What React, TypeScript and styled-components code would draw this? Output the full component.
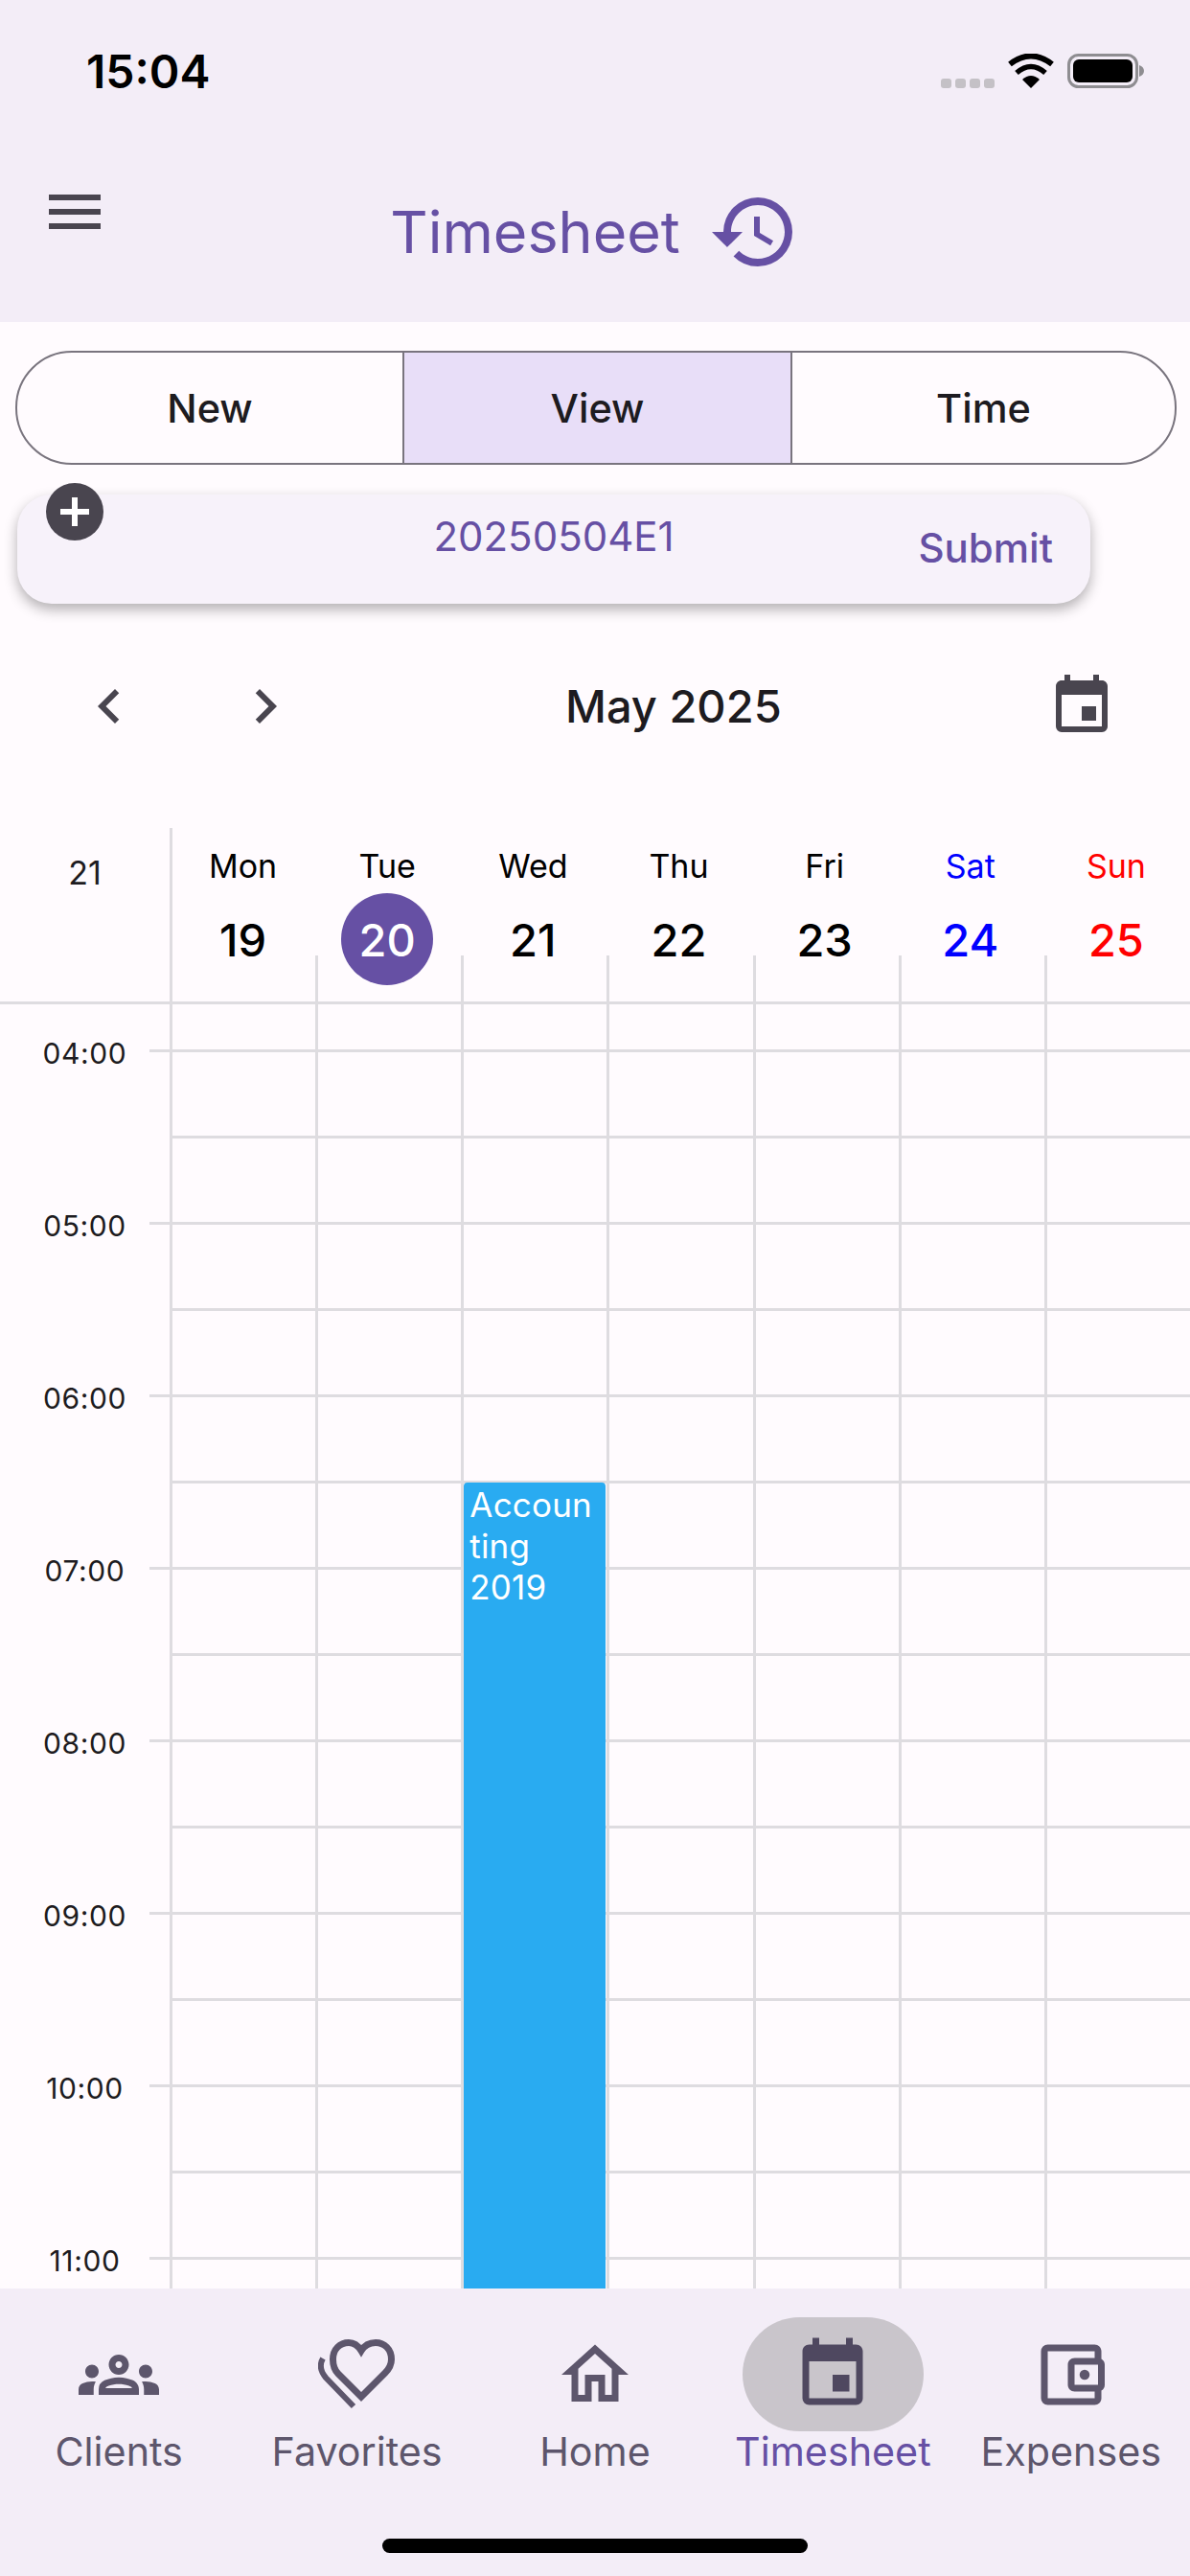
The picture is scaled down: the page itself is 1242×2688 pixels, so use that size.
import styled, { createGlobalStyle } from 'styled-components';
import {
    MdChevronLeft,
    MdChevronRight,
    MdEvent,
    MdHistory,
    MdMenu,
    MdOutlineAccountBalanceWallet,
    MdOutlineGroups,
    MdOutlineHome,
} from 'react-icons/md';

const PURPLE = '#6650A4';
const INK = '#1D1B20';
const ICON = '#49454F';
const LINE = '#DEDCE0';
const NAV_ICON = '#5D566C';
const SURFACE = '#F3EDF7';

const GlobalStyle = createGlobalStyle`
    html, body {
        margin: 0;
        padding: 0;
        background: #FFFBFE;
    }
    * {
        box-sizing: border-box;
    }
`

//#region   Header
const Page = styled.div`
    width: 1242px;
    height: 2688px;
    overflow: hidden;
    display: flex;
    flex-direction: column;
    background: #FFFBFE;
    font-family: Inter, "Liberation Sans", sans-serif;
    color: ${INK};
`

const Header = styled.header`
    height: 336px;
    flex: none;
    background: ${SURFACE};
    display: flex;
    flex-direction: column;
`

const StatusBar = styled.div`
    height: 148px;
    display: flex;
    align-items: center;
    padding: 0 48px 0 90px;
`

const Clock = styled.span`
    font-size: 48px;
    font-weight: 600;
    color: #000;
`

const StatusIcons = styled.div`
    margin-left: auto;
    display: flex;
    align-items: center;
    gap: 14px;
`

const TitleBar = styled.div`
    flex: 1;
    display: grid;
    grid-template-columns: 1fr auto 1fr;
    align-items: start;
`

const MenuButton = styled.div`
    width: 72px;
    height: 72px;
    margin: 37px 0 0 42px;
    color: ${ICON};
    font-size: 72px;
    line-height: 0;
`

const TitleGroup = styled.div`
    display: flex;
    align-items: center;
    gap: 29px;
    margin-top: 46px;
    color: ${PURPLE};
    font-size: 96px;
    line-height: 0;
`

const Title = styled.h1`
    margin: 0;
    font-size: 61px;
    font-weight: 400;
    line-height: 96px;
`
//#endregion   Header

//#region   Segmentos e cartão
const Segmented = styled.div`
    margin: 30px 0 0 16px;
    width: 1212px;
    height: 119px;
    flex: none;
    display: grid;
    grid-template-columns: 402px 405px 1fr;
    border: 2.5px solid #79747E;
    border-radius: 59px;
    overflow: hidden;
`

const Segment = styled.div<{ $selected?: boolean }>`
    display: flex;
    align-items: center;
    justify-content: center;
    font-size: 41.5px;
    font-weight: 500;
    background: ${props => props.$selected ? '#E8DEF8' : 'transparent'};
    & + & {
        border-left: 2.5px solid #79747E;
    }
`

const Card = styled.div`
    position: relative;
    margin: 31px 0 0 18px;
    width: 1120px;
    height: 114px;
    flex: none;
    display: grid;
    grid-template-columns: 1fr auto 1fr;
    background: #F7F2FA;
    border-radius: 36px;
    box-shadow: 0 6px 14px rgba(0, 0, 0, 0.3);
    color: ${PURPLE};
`

const AddButton = styled.div`
    position: absolute;
    left: 30px;
    top: -12px;
    width: 60px;
    height: 60px;
    border-radius: 50%;
    background: ${ICON};
    display: flex;
    align-items: center;
    justify-content: center;
`

const CardCode = styled.div`
    grid-column: 2;
    font-size: 42px;
    line-height: 50px;
    padding-top: 19px;
`

const SubmitLabel = styled.div`
    grid-column: 3;
    justify-self: end;
    padding: 31px 39px 0 0;
    font-size: 42px;
    font-weight: 500;
    line-height: 50px;
`
//#endregion   Segmentos e cartão

//#region   Barra do mês
const MonthBar = styled.div`
    flex: none;
    height: 72px;
    margin-top: 71px;
    padding: 0 77px 0 78px;
    display: flex;
    align-items: center;
    color: ${ICON};
    font-size: 72px;
    line-height: 0;
`

const MonthArrows = styled.div`
    display: flex;
    gap: 91px;
`

const MonthTitle = styled.div`
    margin-left: 277px;
    font-size: 47px;
    font-weight: 500;
    line-height: 60px;
    color: ${INK};
`

const MonthPicker = styled.div`
    margin-left: auto;
`
//#endregion   Barra do mês

//#region   Calendário
const Calendar = styled.section`
    flex: 1;
    min-height: 0;
    margin-top: 91px;
    display: flex;
    flex-direction: column;
    overflow: hidden;
`

const WeekHead = styled.div`
    flex: none;
    height: 184px;
    display: flex;
    border-bottom: 3px solid ${LINE};
`

const WeekNumber = styled.div`
    width: 177px;
    flex: none;
    font-size: 34px;
    line-height: 44px;
    padding-top: 25px;
    text-align: center;
`

const DayHeads = styled.div`
    flex: 1;
    display: grid;
    grid-template-columns: repeat(7, 1fr);
`

const DayHead = styled.div<{ $tone?: string }>`
    position: relative;
    display: flex;
    flex-direction: column;
    align-items: center;
    padding-right: 2px;
    color: ${props => props.$tone || '#000'};
    &:first-child {
        border-left: 3px solid ${LINE};
    }
    &:not(:first-child)::before {
        content: '';
        position: absolute;
        left: 0;
        bottom: 0;
        height: 48px;
        border-left: 3px solid ${LINE};
    }
`

const DayName = styled.span`
    margin-top: 18px;
    font-size: 34px;
    line-height: 44px;
`

const DayNumber = styled.span<{ $today?: boolean }>`
    position: relative;
    margin-top: 6px;
    width: 96px;
    height: 96px;
    border-radius: 50%;
    display: flex;
    align-items: center;
    justify-content: center;
    font-size: 47px;
    font-weight: 500;
    background: ${props => props.$today ? PURPLE : 'transparent'};
    color: ${props => props.$today ? '#FFF' : 'inherit'};
`

const GridBody = styled.div`
    flex: 1;
    min-height: 0;
    display: flex;
`

const TimeGutter = styled.div`
    width: 177px;
    flex: none;
    padding-top: 47px;
`

const HourSlot = styled.div`
    position: relative;
    height: 180px;
    &::after {
        content: '';
        position: absolute;
        top: 0;
        left: 156px;
        right: 0;
        border-top: 3px solid ${LINE};
    }
`

const HourLabel = styled.div`
    position: absolute;
    top: -16px;
    width: 177px;
    font-size: 30px;
    letter-spacing: 0.6px;
    line-height: 40px;
    text-align: center;
`

const DayColumns = styled.div`
    flex: 1;
    display: grid;
    grid-template-columns: repeat(7, 1fr);
`

const DayColumn = styled.div`
    position: relative;
    border-left: 3px solid ${LINE};
    background-image: linear-gradient(${LINE} 3px, transparent 3px);
    background-size: 100% 90px;
    background-position: 0 47px;
`

const EventBlock = styled.div`
    position: absolute;
    left: 0;
    right: 1px;
    top: 499px;
    bottom: 0;
    padding: 2px 6px;
    border-radius: 4px 4px 0 0;
    background: #29ABF1;
    color: #FFF;
    font-size: 35px;
    letter-spacing: 0.2px;
    line-height: 43px;
    overflow-wrap: anywhere;
`
//#endregion   Calendário

//#region   Navegação inferior
const BottomNav = styled.nav`
    flex: none;
    height: 300px;
    background: ${SURFACE};
    position: relative;
    display: grid;
    grid-template-columns: repeat(5, 1fr);
    align-items: start;
    padding-top: 30px;
`

const NavItem = styled.div<{ $active?: boolean }>`
    display: flex;
    flex-direction: column;
    align-items: center;
    color: ${props => props.$active ? PURPLE : NAV_ICON};
`

const NavIcon = styled.div<{ $active?: boolean }>`
    width: 189px;
    height: 119px;
    border-radius: 60px;
    display: flex;
    align-items: center;
    justify-content: center;
    font-size: 84px;
    line-height: 0;
    background: ${props => props.$active ? '#C9C5CB' : 'transparent'};
    color: ${props => props.$active ? '#4F4860' : NAV_ICON};
`

const NavLabel = styled.span`
    margin-top: -1px;
    font-size: 41.25px;
    line-height: 44px;
    white-space: nowrap;
`

const HomeIndicator = styled.div`
    position: absolute;
    left: 399px;
    bottom: 24px;
    width: 444px;
    height: 15px;
    border-radius: 8px;
    background: #000;
`
//#endregion   Navegação inferior

function PlusGlyph() {
    return (
        <svg width="30" height="30" viewBox="0 0 30 30">
            <path d="M15 0v30M0 15h30" stroke="#FFF" strokeWidth="6" />
        </svg>
    );
}

function SignalDots() {
    return (
        <svg width="56" height="36" viewBox="0 0 56 36" fill="#C4C1C6">
            <rect x="0" y="26" width="11" height="10" rx="3" />
            <rect x="15" y="26" width="11" height="10" rx="3" />
            <rect x="30" y="26" width="11" height="10" rx="3" />
            <rect x="45" y="26" width="11" height="10" rx="3" />
        </svg>
    );
}

function WifiGlyph() {
    return (
        <svg width="48" height="36" viewBox="0 0 48 36">
            <path d="M24 36 L15 27 Q24 19 33 27 Z" fill="#000" />
            <path d="M9 20 Q24 7 39 20" fill="none" stroke="#000" strokeWidth="5.5" />
            <path d="M2 11 Q24 -6 46 11" fill="none" stroke="#000" strokeWidth="6" />
        </svg>
    );
}

function BatteryGlyph() {
    return (
        <svg width="80" height="36" viewBox="0 0 80 36">
            <rect x="1.5" y="1.5" width="71" height="33" rx="10" fill="none" stroke="#8E8D91" strokeWidth="3" />
            <rect x="6" y="6" width="62" height="24" rx="6" fill="#000" />
            <path d="M75 12 C78 13 80 15 80 18 C80 21 78 23 75 24 Z" fill="#8E8D91" />
        </svg>
    );
}

function DoubleHeart() {
    return (
        <svg width="82" height="76" viewBox="0 0 82 76" fill="none" stroke={NAV_ICON}>
            <path
                strokeWidth="7"
                strokeLinejoin="miter"
                d="M45 61 L21 37 C17 33 15.5 27 15.5 22 C15.5 11 23 4.5 32 4.5 C37 4.5 42 8 45 13 C48 8 53 4.5 60 4.5 C69 4.5 76.5 11 76.5 22 C76.5 27 74 32 70 36 Z"
            />
            <path strokeWidth="6" d="M5 21 C1 28 3 35 8 41 L37 71" />
        </svg>
    );
}

const horas = ['04:00', '05:00', '06:00', '07:00', '08:00', '09:00', '10:00', '11:00'];

const dias = [
    { nome: 'Mon', numero: 19 },
    { nome: 'Tue', numero: 20, hoje: true },
    { nome: 'Wed', numero: 21 },
    { nome: 'Thu', numero: 22 },
    { nome: 'Fri', numero: 23 },
    { nome: 'Sat', numero: 24, tom: '#0000FF' },
    { nome: 'Sun', numero: 25, tom: '#FF0000' },
];

const abas = [
    { nome: 'Clients', icone: <MdOutlineGroups /> },
    { nome: 'Favorites', icone: <DoubleHeart /> },
    { nome: 'Home', icone: <MdOutlineHome /> },
    { nome: 'Timesheet', icone: <MdEvent />, ativo: true },
    { nome: 'Expenses', icone: <MdOutlineAccountBalanceWallet /> },
];

export default function App() {
    return (
        <Page>
            <GlobalStyle />
            <Header>
                <StatusBar>
                    <Clock>15:04</Clock>
                    <StatusIcons>
                        <SignalDots />
                        <WifiGlyph />
                        <BatteryGlyph />
                    </StatusIcons>
                </StatusBar>
                <TitleBar>
                    <MenuButton><MdMenu /></MenuButton>
                    <TitleGroup>
                        <Title>Timesheet</Title>
                        <MdHistory />
                    </TitleGroup>
                </TitleBar>
            </Header>

            <Segmented>
                <Segment>New</Segment>
                <Segment $selected>View</Segment>
                <Segment>Time</Segment>
            </Segmented>

            <Card>
                <AddButton><PlusGlyph /></AddButton>
                <CardCode>20250504E1</CardCode>
                <SubmitLabel>Submit</SubmitLabel>
            </Card>

            <MonthBar>
                <MonthArrows>
                    <MdChevronLeft />
                    <MdChevronRight />
                </MonthArrows>
                <MonthTitle>May 2025</MonthTitle>
                <MonthPicker><MdEvent /></MonthPicker>
            </MonthBar>

            <Calendar>
                <WeekHead>
                    <WeekNumber>21</WeekNumber>
                    <DayHeads>
                        {dias.map(dia => (
                            <DayHead key={dia.nome} $tone={dia.tom}>
                                <DayName>{dia.nome}</DayName>
                                <DayNumber $today={dia.hoje}>{dia.numero}</DayNumber>
                            </DayHead>
                        ))}
                    </DayHeads>
                </WeekHead>
                <GridBody>
                    <TimeGutter>
                        {horas.map(hora => (
                            <HourSlot key={hora}>
                                <HourLabel>{hora}</HourLabel>
                            </HourSlot>
                        ))}
                    </TimeGutter>
                    <DayColumns>
                        {dias.map(dia => (
                            <DayColumn key={dia.nome}>
                                {dia.nome === 'Wed' && <EventBlock>Accounting 2019</EventBlock>}
                            </DayColumn>
                        ))}
                    </DayColumns>
                </GridBody>
            </Calendar>

            <BottomNav>
                {abas.map(aba => (
                    <NavItem key={aba.nome} $active={aba.ativo}>
                        <NavIcon $active={aba.ativo}>{aba.icone}</NavIcon>
                        <NavLabel>{aba.nome}</NavLabel>
                    </NavItem>
                ))}
                <HomeIndicator />
            </BottomNav>
        </Page>
    );
}
